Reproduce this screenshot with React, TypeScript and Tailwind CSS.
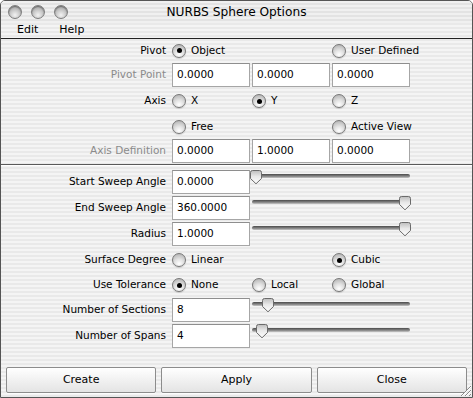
import React from "react";

const stripes =
  "bg-[repeating-linear-gradient(to_bottom,#f4f4f4_0px,#f4f4f4_2px,#e9e9e9_2px,#e9e9e9_4px)]";

function Light() {
  return (
    <span className="h-[14px] w-[14px] rounded-full border border-[#7c7c7c] bg-[radial-gradient(circle_at_50%_75%,#f2f2f2_0%,#c9c9c9_45%,#8f8f8f_100%)] shadow-[inset_0_1px_1px_rgba(0,0,0,0.35)]" />
  );
}

function Radio({ label, checked = false }: { label?: string; checked?: boolean }) {
  return (
    <div className="flex items-center gap-[5px] whitespace-nowrap">
      <span className="flex h-[14px] w-[14px] shrink-0 items-center justify-center rounded-full border border-[#777] bg-[radial-gradient(circle_at_50%_80%,#ffffff_0%,#e2e2e2_40%,#a9a9a9_100%)] shadow-[0_1px_1px_rgba(0,0,0,0.15)]">
        {checked && <span className="h-[5px] w-[5px] rounded-full bg-black" />}
      </span>
      {label && <span className="text-black">{label}</span>}
    </div>
  );
}

function Field({ value }: { value: string }) {
  return (
    <div className="flex h-[24px] w-[78px] shrink-0 items-center border border-[#a6a6a6] border-t-[#8e8e8e] bg-white pl-[4px] text-black">
      {value}
    </div>
  );
}

function Slider({ pos }: { pos: number }) {
  // pos is the thumb centre, px from the track's left edge
  return (
    <div className="relative ml-[2px] h-[24px] w-[158px] self-start">
      <div className="absolute left-0 right-0 top-[5px] h-[4px] rounded-full bg-[linear-gradient(to_bottom,#4a4a4a,#8a8a8a_60%,#c8c8c8)]" />
      <svg
        className="absolute top-[1px]"
        style={{ left: pos - 7 }}
        width="14"
        height="15"
        viewBox="0 0 14 15"
      >
        <defs>
          <linearGradient id="th" x1="0" y1="0" x2="0" y2="1">
            <stop offset="0" stopColor="#bdbdbd" />
            <stop offset="0.45" stopColor="#e8e8e8" />
            <stop offset="1" stopColor="#ffffff" />
          </linearGradient>
        </defs>
        <path d="M1.5 2.5 Q1.5 0.5 3.5 0.5 H10.5 Q12.5 0.5 12.5 2.5 V8.5 L7 13.8 L1.5 8.5 Z" fill="url(#th)" stroke="#6a6a6a" strokeWidth="1" />
      </svg>
    </div>
  );
}

function Label({ children, dim = false }: { children?: React.ReactNode; dim?: boolean }) {
  return (
    <div className={`w-[171px] shrink-0 whitespace-nowrap pr-[6px] text-right ${dim ? "text-[#8b8b8b]" : "text-black"}`}>
      {children}
    </div>
  );
}

function Cell({ children }: { children?: React.ReactNode }) {
  return <div className="flex w-[80px] shrink-0 items-center">{children}</div>;
}

function Button({ label }: { label: string }) {
  return (
    <button className="flex h-[26px] flex-1 items-center justify-center rounded-[2px] border border-[#8c8c8c] bg-[linear-gradient(to_bottom,#ffffff,#f1f1f1_50%,#e4e4e4)] text-[11px] text-black shadow-[0_1px_0_rgba(255,255,255,0.8)]">
      {label}
    </button>
  );
}

export default function App() {
  return (
    <div
      className={`relative flex h-[398px] w-[473px] flex-col overflow-hidden rounded-t-[5px] border border-[#555] font-['DejaVu_Sans',sans-serif] text-[10.5px] ${stripes}`}
    >
      {/* title bar */}
      <div className="grid h-[22px] shrink-0 grid-cols-[1fr_auto_1fr] items-center bg-[repeating-linear-gradient(to_bottom,#f0f0f0_0px,#f0f0f0_2px,#e3e3e3_2px,#e3e3e3_4px)]">
        <div className="flex gap-[9px] pl-[7px]">
          <Light />
          <Light />
          <Light />
        </div>
        <div className="text-[12.2px] text-black">NURBS Sphere Options</div>
        <div />
      </div>

      {/* menu bar */}
      <div className="flex h-[15px] shrink-0 items-center gap-[21px] pl-[16px] text-[11px] text-black">
        <span>Edit</span>
        <span>Help</span>
      </div>
      <div className="h-px shrink-0 bg-[#222]" />

      {/* pivot / axis */}
      <div className="flex h-[23px] items-center">
        <Label>Pivot</Label>
        <Cell><Radio label="Object" checked /></Cell>
        <Cell />
        <Cell><Radio label="User Defined" /></Cell>
      </div>
      <div className="flex h-[26px] items-center">
        <Label dim>Pivot Point</Label>
        <Cell><Field value="0.0000" /></Cell>
        <Cell><Field value="0.0000" /></Cell>
        <Cell><Field value="0.0000" /></Cell>
      </div>
      <div className="flex h-[26px] items-center">
        <Label>Axis</Label>
        <Cell><Radio label="X" /></Cell>
        <Cell><Radio label="Y" checked /></Cell>
        <Cell><Radio label="Z" /></Cell>
      </div>
      <div className="flex h-[25px] items-center">
        <Label />
        <Cell><Radio label="Free" /></Cell>
        <Cell />
        <Cell><Radio label="Active View" /></Cell>
      </div>
      <div className="flex h-[24px] items-center">
        <Label dim>Axis Definition</Label>
        <Cell><Field value="0.0000" /></Cell>
        <Cell><Field value="1.0000" /></Cell>
        <Cell><Field value="0.0000" /></Cell>
      </div>

      <div className="mt-px h-px shrink-0 bg-[#5a5a5a]" />
      <div className="h-px shrink-0 bg-white" />

      {/* sphere settings */}
      <div className="mt-[3px] flex h-[26px] items-center">
        <Label>Start Sweep Angle</Label>
        <Field value="0.0000" />
        <Slider pos={4} />
      </div>
      <div className="flex h-[26px] items-center">
        <Label>End Sweep Angle</Label>
        <Field value="360.0000" />
        <Slider pos={153} />
      </div>
      <div className="flex h-[26px] items-center">
        <Label>Radius</Label>
        <Field value="1.0000" />
        <Slider pos={153} />
      </div>
      <div className="flex h-[26px] items-center">
        <Label>Surface Degree</Label>
        <Cell><Radio label="Linear" /></Cell>
        <Cell />
        <Cell><Radio label="Cubic" checked /></Cell>
      </div>
      <div className="flex h-[24px] items-center">
        <Label>Use Tolerance</Label>
        <Cell><Radio label="None" checked /></Cell>
        <Cell><Radio label="Local" /></Cell>
        <Cell><Radio label="Global" /></Cell>
      </div>
      <div className="flex h-[26px] items-center">
        <Label>Number of Sections</Label>
        <Field value="8" />
        <Slider pos={16} />
      </div>
      <div className="flex h-[25px] items-center">
        <Label>Number of Spans</Label>
        <Field value="4" />
        <Slider pos={10} />
      </div>

      {/* buttons */}
      <div className="mt-auto flex gap-[5px] px-[5px] pb-[4px]">
        <Button label="Create" />
        <Button label="Apply" />
        <Button label="Close" />
      </div>

      {/* resize grip */}
      <svg className="absolute bottom-0 right-0" width="14" height="14" viewBox="0 0 14 14">
        <path d="M13 3 L3 13 M13 7 L7 13 M13 11 L11 13" stroke="#8a8a8a" strokeWidth="1" />
        <path d="M13 4 L4 13 M13 8 L8 13" stroke="#ffffff" strokeWidth="1" />
      </svg>
    </div>
  );
}
